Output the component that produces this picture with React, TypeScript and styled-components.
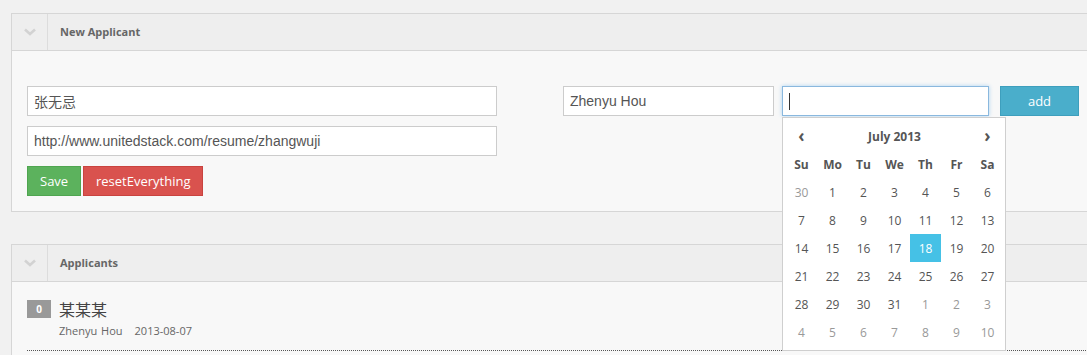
import React from 'react'
import styled, { createGlobalStyle } from 'styled-components';

const GlobalStyle = createGlobalStyle`
    html, body {
        margin: 0;
        padding: 0;
        background: #f1f1f1;
        overflow: hidden;
    }
    body {
        font-family: "Open Sans", "Noto Sans CJK SC", sans-serif;
        color: #555;
    }
`;

const Page = styled.div`
    padding: 13px 0 0 11px;
    width: 1120px;
`;

const Panel = styled.section`
    border: 1px solid #d6d6d6;
    background: #f8f8f8;
    margin-bottom: 32px;
    position: relative;
`;

const PanelHeader = styled.header`
    display: flex;
    align-items: center;
    height: 36px;
    background: #eeeeee;
    border-bottom: 1px solid #d6d6d6;
`;

const Toggle = styled.span`
    width: 35px;
    height: 36px;
    border-right: 1px solid #dcdcdc;
    display: flex;
    align-items: center;
    justify-content: center;
`;

const PanelTitle = styled.h2`
    margin: -1px 0 0 12px;
    font-size: 11px;
    font-weight: 700;
    color: #666;
`;

const FormBody = styled.div`
    display: flex;
    padding: 35px 15px 15px 15px;
    gap: 66px;
`;

const Column = styled.div`
    display: flex;
    flex-direction: column;
    gap: 10px;
    width: 470px;
`;

const Row = styled.div`
    display: flex;
    align-items: flex-start;
    gap: ${props => props.gap || 8}px;
`;

const Input = styled.div`
    box-sizing: border-box;
    width: ${props => props.width}px;
    height: 30px;
    background: #fff;
    border: 1px solid ${props => props.focused ? '#8ab8de' : '#cccccc'};
    box-shadow: ${props => props.focused ? '0 0 4px rgba(82,168,236,0.45)' : 'none'};
    font-family: "Liberation Sans", "Noto Sans CJK SC", Arial, sans-serif;
    font-size: 14px;
    color: #555;
    padding: 0 6px;
    display: flex;
    align-items: center;
`;

const Caret = styled.span`
    width: 1px;
    height: 17px;
    background: #333;
`;

const Button = styled.button`
    height: 30px;
    border: 1px solid ${props => props.border};
    background: ${props => props.bg};
    color: #fff;
    font-family: "Open Sans", sans-serif;
    font-size: 13px;
    padding: 0 ${props => props.pad || 12}px;
    margin: 0 0 0 ${props => props.offset || 0}px;
    width: ${props => props.width ? props.width + 'px' : 'auto'};
`;

const Buttons = styled.div`
    display: flex;
    gap: 2px;
`;

const Picker = styled.div`
    position: absolute;
    left: 770px;
    top: 103px;
    width: 224px;
    box-sizing: border-box;
    background: #fff;
    border: 1px solid #cfcfcf;
    padding: 4px 3px;
    z-index: 2;
`;

const Grid = styled.div`
    display: grid;
    grid-template-columns: repeat(7, 31px);
    grid-auto-rows: 28px;
    font-size: 12px;
`;

const Cell = styled.div`
    display: flex;
    align-items: center;
    justify-content: center;
    color: ${props => props.active ? '#fff' : props.muted ? '#999' : '#555'};
    background: ${props => props.active ? '#45c1e6' : 'transparent'};
    font-weight: ${props => props.bold ? 700 : 400};
`;

const Arrow = styled(Cell)`
    font-size: 17px;
    font-weight: 700;
    padding-bottom: 2px;
    box-sizing: border-box;
`;

const MonthCell = styled(Cell)`
    grid-column: span 5;
    font-weight: 700;
`;

const ListBody = styled.div`
    padding: 16px 0 0 15px;
    height: 72px;
`;

const Item = styled.div`
    display: flex;
    gap: 8px;
    align-items: flex-start;
`;

const Badge = styled.span`
    margin-top: 2px;
    width: 24px;
    height: 18px;
    background: #999;
    color: #fff;
    font-size: 10px;
    font-weight: 700;
    display: flex;
    align-items: center;
    justify-content: center;
`;

const Name = styled.div`
    font-size: 16px;
    color: #444;
    line-height: 22px;
    font-family: "Noto Sans CJK SC", sans-serif;
`;

const Meta = styled.div`
    font-size: 11px;
    color: #666;
    margin-top: 3px;
    word-spacing: 1px;
    & span + span {
        margin-left: 12px;
    }
`;

const Divider = styled.div`
    margin-top: 12px;
    border-top: 1px dotted #555;
`;

function Chevron() {
    return (
        <svg width="12" height="8" viewBox="0 0 12 8">
            <path d="M1 1.5 L6 6 L11 1.5" fill="none" stroke="#d2d2d2" strokeWidth="2.6" />
        </svg>
    );
}

const days = ['Su', 'Mo', 'Tu', 'We', 'Th', 'Fr', 'Sa'];

function buildDates() {
    const cells = [{ d: 30, muted: true }];
    for (let i = 1; i <= 31; i++) cells.push({ d: i, muted: false });
    for (let i = 1; i <= 10; i++) cells.push({ d: i, muted: true });
    return cells;
}

export default function App() {
    const dates = buildDates();
    return (
        <>
            <GlobalStyle />
            <Page>
                <Panel>
                    <PanelHeader>
                        <Toggle><Chevron /></Toggle>
                        <PanelTitle>New Applicant</PanelTitle>
                    </PanelHeader>
                    <FormBody>
                        <Column>
                            <Input width={470}>张无忌</Input>
                            <Input width={470}>http://www.unitedstack.com/resume/zhangwuji</Input>
                            <Buttons>
                                <Button bg="#5cb25d" border="#4fa550" width={54}>Save</Button>
                                <Button bg="#d9524e" border="#c9433f" width={120}>resetEverything</Button>
                            </Buttons>
                        </Column>
                        <Row gap={8}>
                            <Input width={211}>Zhenyu Hou</Input>
                            <Input width={207} focused><Caret /></Input>
                            <Button bg="#4aaecb" border="#3e9fbd" width={79} offset={3}>add</Button>
                        </Row>
                    </FormBody>
                    <Picker>
                        <Grid>
                            <Arrow>‹</Arrow>
                            <MonthCell>July 2013</MonthCell>
                            <Arrow>›</Arrow>
                            {days.map(d => <Cell key={d} bold>{d}</Cell>)}
                            {dates.map((c, i) => (
                                <Cell key={i} muted={c.muted} active={!c.muted && c.d === 18}>{c.d}</Cell>
                            ))}
                        </Grid>
                    </Picker>
                </Panel>
                <Panel>
                    <PanelHeader>
                        <Toggle><Chevron /></Toggle>
                        <PanelTitle>Applicants</PanelTitle>
                    </PanelHeader>
                    <ListBody>
                        <Item>
                            <Badge>0</Badge>
                            <div>
                                <Name>某某某</Name>
                                <Meta><span>Zhenyu Hou</span><span>2013-08-07</span></Meta>
                            </div>
                        </Item>
                        <Divider />
                    </ListBody>
                </Panel>
            </Page>
        </>
    )
}
